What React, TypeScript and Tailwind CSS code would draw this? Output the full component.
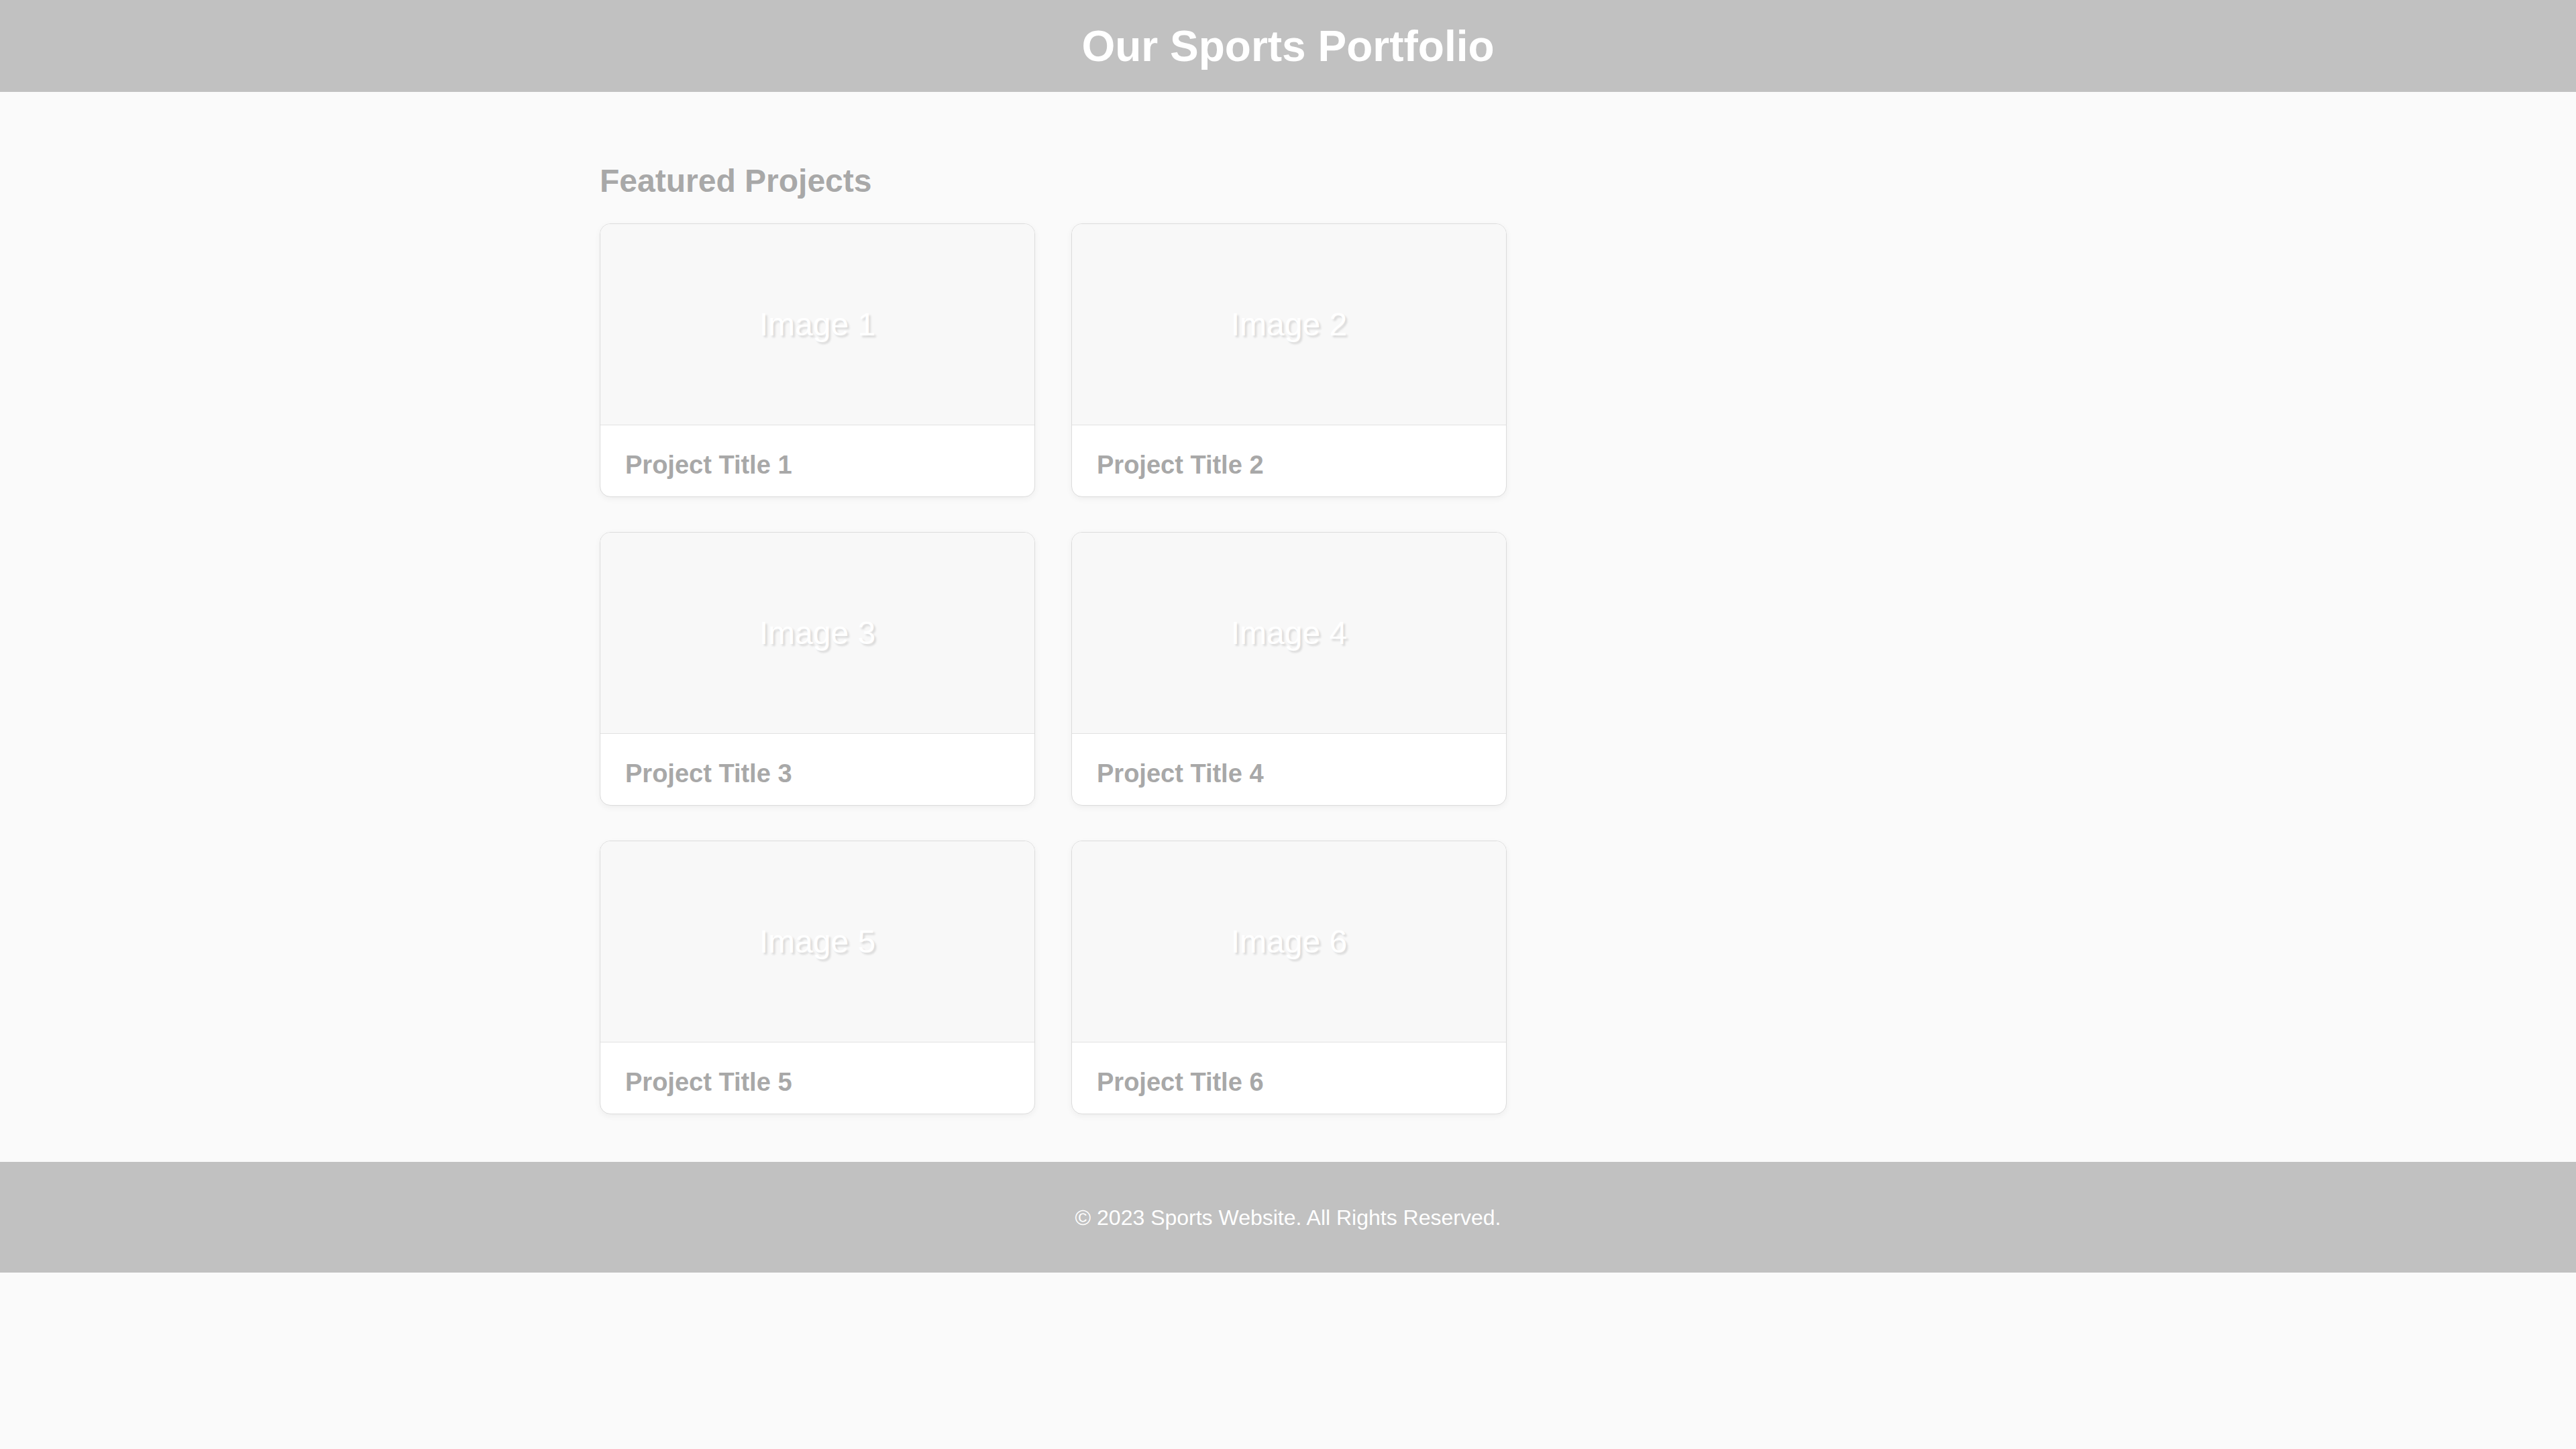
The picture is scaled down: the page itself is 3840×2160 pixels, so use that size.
import React from "react";

const projects = [1, 2, 3, 4, 5, 6];

export default function App() {
  return (
    <div className="min-h-[2160px] bg-[#fafafa] font-['Liberation_Sans',Arial,sans-serif]">
      <header className="flex h-[137px] items-center justify-center bg-[#c1c1c1]">
        <h1 className="text-[64px] font-bold leading-none text-white">Our Sports Portfolio</h1>
      </header>
      <main className="mx-auto w-[2052px] pt-[105px] pb-[71px]">
        <h2 className="mb-[36px] text-[48px] font-bold leading-[55px] text-[#a8a8a8]">Featured Projects</h2>
        <div className="grid grid-cols-[repeat(2,649px)] gap-x-[54px] gap-y-[52px]">
          {projects.map((n) => (
            <div
              key={n}
              className="flex h-[408px] flex-col overflow-hidden rounded-[16px] border border-[#dcdcdc] bg-white shadow-[0_3px_10px_rgba(0,0,0,0.05)]"
            >
              <div className="flex h-[300px] items-center justify-center border-b border-[#e2e2e2] bg-[#f8f8f8]">
                <span className="text-[48px] leading-none text-white [text-shadow:3px_3px_3px_rgba(0,0,0,0.12)]">
                  Image {n}
                </span>
              </div>
              <div className="flex flex-1 items-center px-[37px] pt-[12px]">
                <span className="text-[38px] font-bold leading-none text-[#a8a8a8]">Project Title {n}</span>
              </div>
            </div>
          ))}
        </div>
      </main>
      <footer className="flex h-[165px] items-center justify-center bg-[#c1c1c1]">
        <p className="text-[32px] leading-none text-white">© 2023 Sports Website. All Rights Reserved.</p>
      </footer>
    </div>
  );
}
